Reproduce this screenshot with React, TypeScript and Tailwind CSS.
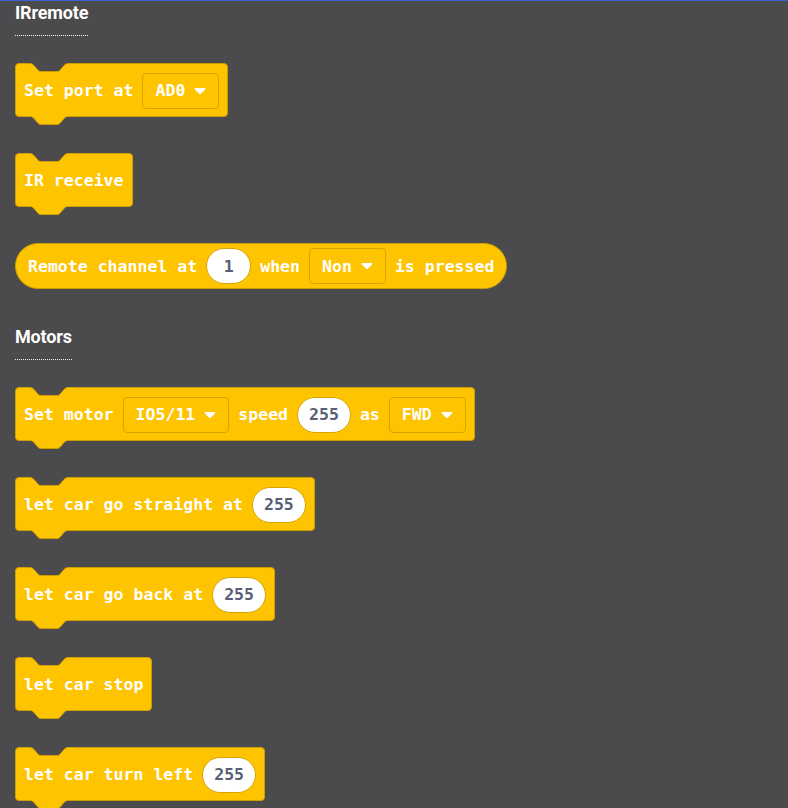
import React from "react";

const mono = { fontFamily: '"DejaVu Sans Mono", "Liberation Mono", monospace' };

// notch curve shared by the top notch and the bottom tab
const NOTCH = "M0,0.5 C2,0.5 3,1.5 4,2.5 L7,6 C8,7.5 9,8.5 11,8.5 L27,8.5 C29,8.5 30,7.5 31,6 L34,2.5 C35,1.5 36,0.5 38,0.5";

function Arrow() {
  return (
    <svg width="12" height="8" viewBox="0 0 12 8">
      <path d="M1.5,1 L10.5,1 C11.3,1 11.6,1.8 11.1,2.4 L6.8,6.8 C6.4,7.2 5.6,7.2 5.2,6.8 L0.9,2.4 C0.4,1.8 0.7,1 1.5,1 Z" fill="#ffffff" />
    </svg>
  );
}

function Dropdown({ value }: { value: string }) {
  return (
    <span className="inline-flex h-[36px] items-center gap-[9px] rounded-[4px] border border-[#d6a400] px-3 text-white">
      <span className="pt-[2px]">{value}</span>
      <Arrow />
    </span>
  );
}

function Num({ value }: { value: string }) {
  return (
    <span className="inline-flex h-[36px] min-w-[45px] items-center justify-center rounded-full border border-[#d6a400] bg-white px-[11px] pt-[2px] text-[#575e75]">
      {value}
    </span>
  );
}

function Label({ children }: { children: React.ReactNode }) {
  return <span className="whitespace-pre pt-[2px] text-white">{children}</span>;
}

function Block({ children }: { children: React.ReactNode }) {
  return (
    <div
      className="relative inline-flex h-[54px] items-center gap-[9px] rounded-[4px] border border-[#cf9e00] bg-[#ffc400] px-2 pt-[1px] text-[16.55px] font-bold"
      style={mono}
    >
      <svg className="absolute -top-px left-[14px] overflow-visible" width="38" height="10">
        <path d={NOTCH + " L38,0 L0,0 Z"} fill="#4b4a4c" />
        <path d={NOTCH} fill="none" stroke="#cf9e00" strokeWidth="1" />
      </svg>
      {children}
      <svg className="absolute top-full left-[14px] overflow-visible" width="38" height="10">
        <path d={NOTCH + " L38,0 L0,0 Z"} fill="#ffc400" />
        <path d={NOTCH} fill="none" stroke="#cf9e00" strokeWidth="1" />
      </svg>
    </div>
  );
}

function RoundBlock({ children }: { children: React.ReactNode }) {
  return (
    <div
      className="inline-flex h-[46px] items-center gap-[9px] rounded-full border border-[#cf9e00] bg-[#ffc400] px-3 text-[16.55px] font-bold"
      style={mono}
    >
      {children}
    </div>
  );
}

function Heading({ title }: { title: string }) {
  return (
    <div
      className="border-b border-dotted border-white/90 pb-[10px] text-[18px] leading-[24px] font-bold tracking-[-0.15px] text-white"
      style={{ fontFamily: 'Roboto, "Liberation Sans", sans-serif' }}
    >
      {title}
    </div>
  );
}

export default function App() {
  return (
    <div className="h-[808px] w-full overflow-hidden border-t border-[#3f5fd4] bg-[#4b4a4c] pl-[15px]">
      <div className="flex flex-col items-start">
        <Heading title="IRremote" />

        <div className="mt-[27px] flex flex-col items-start gap-[36px]">
          <Block>
            <Label>Set port at</Label>
            <Dropdown value="AD0" />
          </Block>
          <Block>
            <Label>IR receive</Label>
          </Block>
          <RoundBlock>
            <Label>Remote channel at</Label>
            <Num value="1" />
            <Label>when</Label>
            <Dropdown value="Non" />
            <Label>is pressed</Label>
          </RoundBlock>
        </div>

        <div className="mt-[36px]">
          <Heading title="Motors" />
        </div>

        <div className="mt-[27px] flex flex-col items-start gap-[36px]">
          <Block>
            <Label>Set motor</Label>
            <Dropdown value="IO5/11" />
            <Label>speed</Label>
            <Num value="255" />
            <Label>as</Label>
            <Dropdown value="FWD" />
          </Block>
          <Block>
            <Label>let car go straight at</Label>
            <Num value="255" />
          </Block>
          <Block>
            <Label>let car go back at</Label>
            <Num value="255" />
          </Block>
          <Block>
            <Label>let car stop</Label>
          </Block>
          <Block>
            <Label>let car turn left</Label>
            <Num value="255" />
          </Block>
        </div>
      </div>
    </div>
  );
}
